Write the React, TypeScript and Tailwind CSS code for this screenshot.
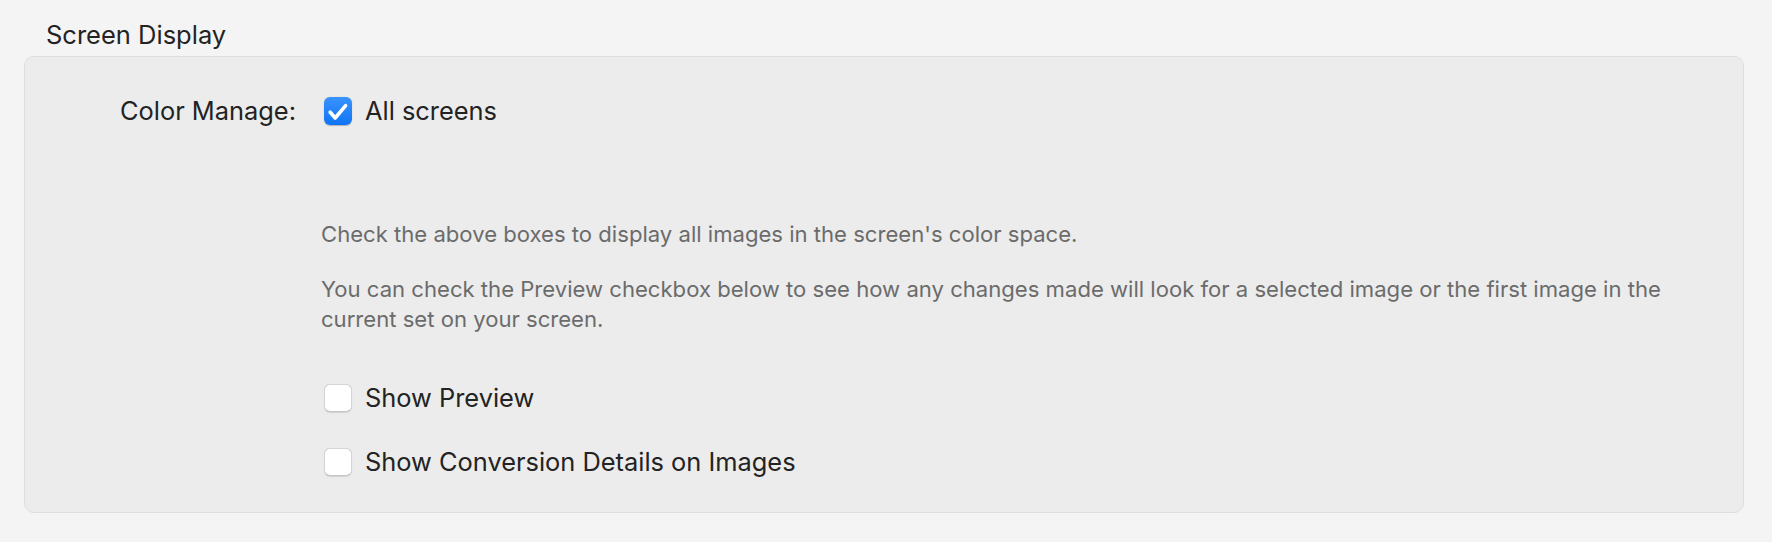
import React from "react";

function Checkbox({ checked }: { checked: boolean }) {
  if (checked) {
    return (
      <div className="ml-[3px] flex h-[28px] w-[28px] shrink-0 items-center justify-center rounded-[6px] bg-gradient-to-b from-[#3893ff] to-[#0b74f4] shadow-[0_0.5px_1px_rgba(0,0,0,0.25)]">
        <svg width="28" height="28" viewBox="0 0 28 28" fill="none">
          <path d="M6.2 15.2 L11.2 21 L21.6 8.6" stroke="white" strokeWidth="3.6" strokeLinecap="round" strokeLinejoin="round" />
        </svg>
      </div>
    );
  }
  return (
    <div className="ml-[3px] h-[28px] w-[28px] shrink-0 rounded-[6px] border border-[#d4d4d4] border-b-[#c4c4c4] bg-white shadow-[0_0.5px_1px_rgba(0,0,0,0.1)]" />
  );
}

export default function App() {
  return (
    <div className="min-h-[542px] w-full bg-[#f4f4f4] pt-[19px] font-['Inter','Helvetica_Neue',Arial,sans-serif] text-[#232323]">
      <div className="pl-[46px] text-[25.5px] leading-[32px]">Screen Display</div>
      <div className="ml-[24px] mr-[28px] mt-[5px] h-[457px] rounded-[10px] border border-[#dedede] bg-[#ececec] pt-[38px]">
        <div className="grid grid-cols-[271px_1fr] gap-x-[25px]">
          <div className="text-right text-[25.4px] leading-[32px]">Color Manage:</div>
          <div className="flex items-center gap-[13px]">
            <Checkbox checked />
            <span className="text-[25.4px] leading-[32px]">All screens</span>
          </div>

          <div />
          <div className="mt-[92px] text-[22.1px] leading-[30px] text-[#6b6b6b]">
            Check the above boxes to display all images in the screen's color space.
          </div>

          <div />
          <div className="mt-[25px] text-[22.1px] leading-[30px] text-[#6b6b6b]">
            You can check the Preview checkbox below to see how any changes made will look for a selected image or the first image in the
            <br />
            current set on your screen.
          </div>

          <div />
          <div className="mt-[48px] flex items-center gap-[13px]">
            <Checkbox checked={false} />
            <span className="text-[25.4px] leading-[32px]">Show Preview</span>
          </div>

          <div />
          <div className="mt-[32px] flex items-center gap-[13px]">
            <Checkbox checked={false} />
            <span className="text-[25.4px] leading-[32px]">Show Conversion Details on Images</span>
          </div>
        </div>
      </div>
    </div>
  );
}
